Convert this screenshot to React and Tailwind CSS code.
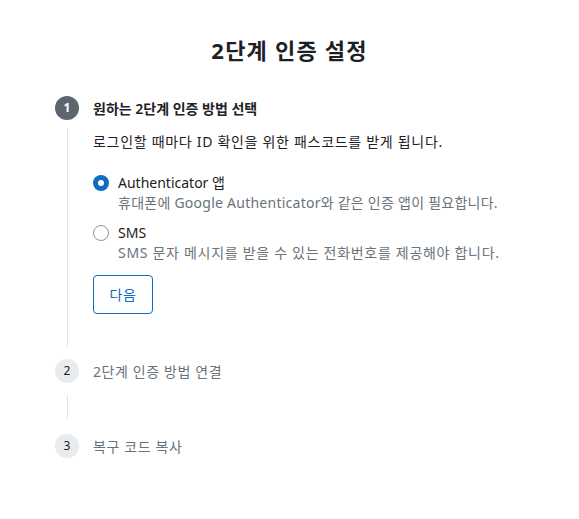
const FONT = { fontFamily: '"Noto Sans", "Noto Sans CJK KR", sans-serif' };

const OPTIONS = [
  {
    id: "app",
    label: "Authenticator 앱",
    desc: "휴대폰에 Google Authenticator와 같은 인증 앱이 필요합니다.",
    descClass: "tracking-[0.25px]",
    checked: true,
  },
  {
    id: "sms",
    label: "SMS",
    desc: "SMS 문자 메시지를 받을 수 있는 전화번호를 제공해야 합니다.",
    descClass: "tracking-[0.7px]",
    checked: false,
  },
];

function Radio({ checked }) {
  if (checked) {
    return (
      <span className="flex h-4 w-4 shrink-0 items-center justify-center rounded-full bg-[#0f6cbf]">
        <span className="h-[6px] w-[6px] rounded-full bg-white" />
      </span>
    );
  }
  return <span className="h-4 w-4 shrink-0 rounded-full border border-[#8f959e] bg-white" />;
}

function StepHead({ n, title, active }) {
  return (
    <div className="flex h-6 items-center">
      <span
        className={`flex h-6 w-6 shrink-0 items-center justify-center rounded-full text-[12px] ${
          active ? "bg-[#5b6670] font-bold text-white" : "bg-[#e9ecef] text-[#1d2125]"
        }`}
      >
        {n}
      </span>
      <span
        className={`ml-[14px] text-[14px] ${
          active ? "font-semibold text-[#1d2125]" : "tracking-[0.6px] text-[#6a737b]"
        }`}
      >
        {title}
      </span>
    </div>
  );
}

export default function App() {
  return (
    <div className="min-h-[519px] bg-white text-[#1d2125]" style={FONT}>
      <h1 className="pt-[35px] text-center text-[22px] font-bold leading-[30px] tracking-[1.2px] text-[#1d2125]">
        2단계 인증 설정
      </h1>

      <div className="pl-[55px] pt-[31px]">
        <StepHead n="1" title="원하는 2단계 인증 방법 선택" active />
        <div className="flex">
          <div className="flex w-6 shrink-0 justify-center pb-3 pt-2">
            <div className="w-px bg-[#dee2e6]" />
          </div>
          <div className="pl-[14px] pt-[11px] pb-[45px]">
            <p className="text-[14px] leading-[21px] tracking-[0.7px]">
              로그인할 때마다 ID 확인을 위한 패스코드를 받게 됩니다.
            </p>
            <div className="mt-[21px] flex flex-col gap-[10px]">
              {OPTIONS.map((o) => (
                <div key={o.id} className="flex">
                  <div className="flex h-5 items-center">
                    <Radio checked={o.checked} />
                  </div>
                  <div className="ml-[9px] text-[14px] leading-5">
                    <div className="text-[#1d2125]">{o.label}</div>
                    <div className={`text-[#6a737b] ${o.descClass}`}>{o.desc}</div>
                  </div>
                </div>
              ))}
            </div>
            <button
              type="button"
              className="mt-[12px] h-[39px] w-[60px] rounded border border-[#0f6cbf] bg-white text-[14px] tracking-[0.5px] text-[#0f6cbf]"
            >
              다음
            </button>
          </div>
        </div>

        <StepHead n="2" title="2단계 인증 방법 연결" />
        <div className="flex h-[51px]">
          <div className="flex w-6 shrink-0 justify-center pb-[15px] pt-3">
            <div className="w-px bg-[#dee2e6]" />
          </div>
        </div>

        <StepHead n="3" title="복구 코드 복사" />
      </div>
    </div>
  );
}
